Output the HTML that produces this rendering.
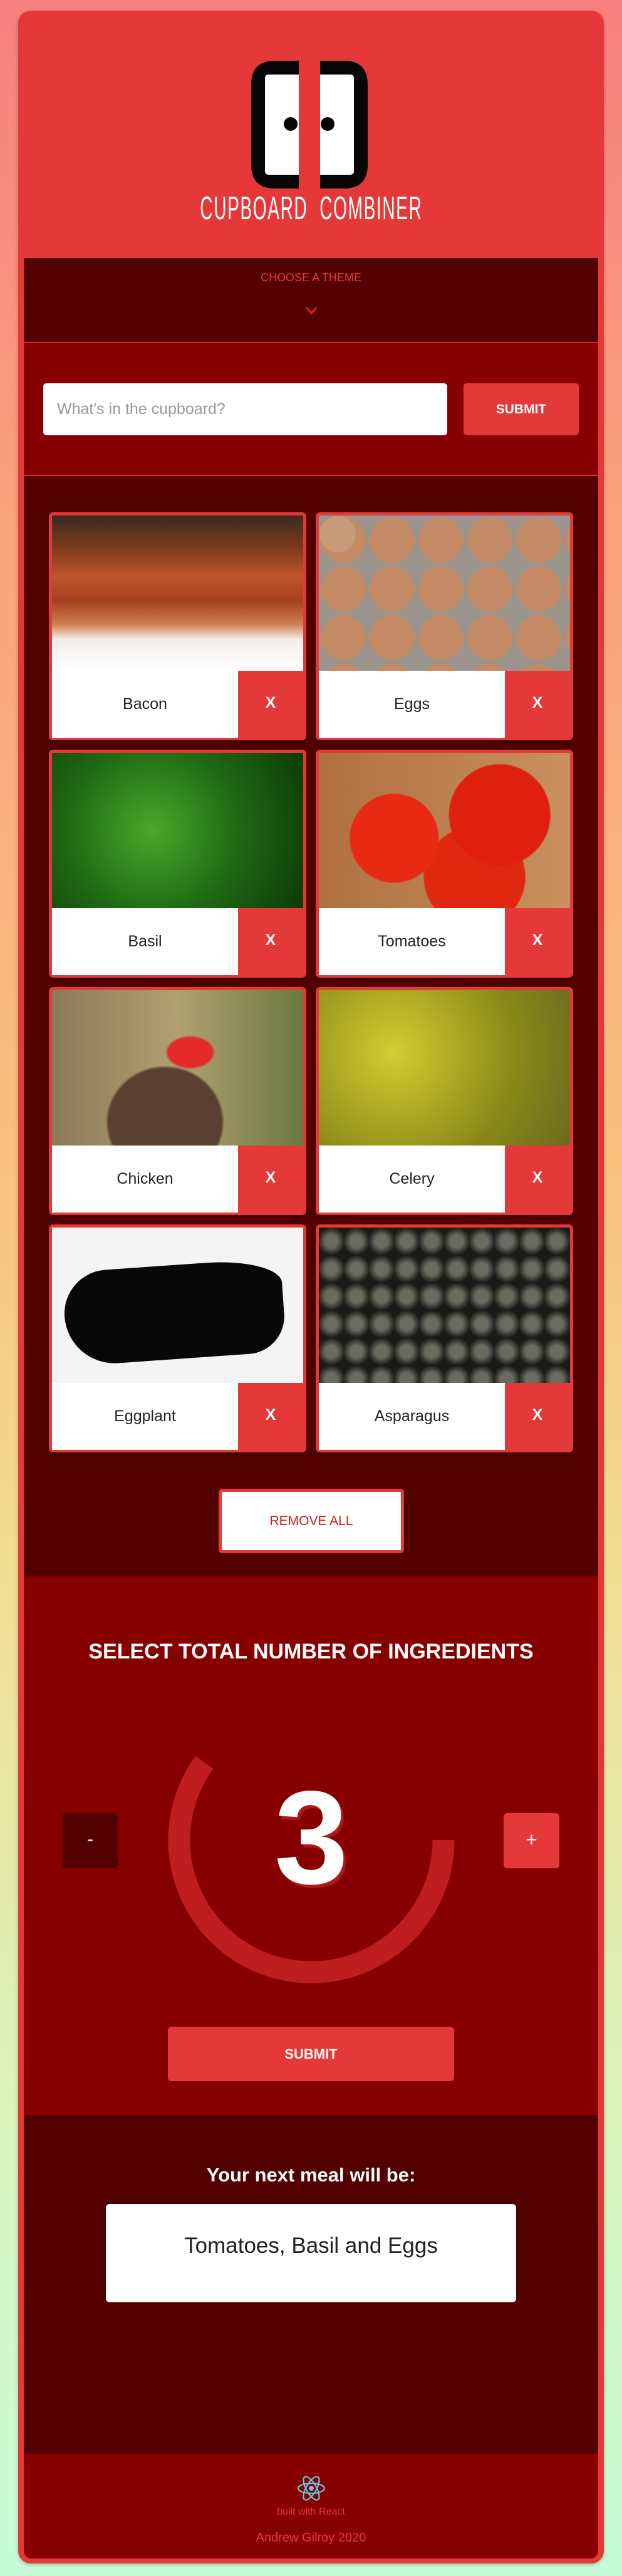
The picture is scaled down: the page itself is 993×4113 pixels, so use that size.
<!DOCTYPE html>
<html><head><meta charset="utf-8"><style>
*{margin:0;padding:0;box-sizing:border-box}
body{width:993px;height:4113px;position:relative;overflow:hidden;font-family:"Liberation Sans",sans-serif;
background:linear-gradient(180deg,#f77f7f 0%,#f9a27c 20%,#f9c07e 45%,#f2dc90 60%,#dcf2b8 80%,#c6fcd8 100%)}
.a{position:absolute}
.card{position:absolute;left:29px;top:17px;width:935px;height:4076px;background:#e53939;border-radius:20px;box-shadow:0 2px 6px rgba(0,0,0,.25)}
.ing{position:absolute;width:411px;height:364px;background:#e53939;border-radius:7px;box-shadow:0 3px 4px rgba(0,0,0,.35)}
.ing .img{position:absolute;left:5px;top:5px;width:401px;height:248px;overflow:hidden}
.ing .lab{position:absolute;left:5px;top:253px;width:297px;height:107px;background:#fff;font-size:25px;color:#222;text-align:center;line-height:107px}
.ing .x{position:absolute;left:302px;top:253px;width:104px;height:107px;color:#fff;font-weight:bold;font-size:25px;text-align:center;line-height:103px}
</style></head><body>
<div class="card"></div>
<!-- header -->
<svg class="a" style="left:401px;top:97px" width="186" height="204" viewBox="0 0 186 204">
<path d="M76 0 H38 Q0 0 0 38 V166 Q0 204 38 204 H76 Z" fill="#060606"/>
<path d="M110 0 H148 Q186 0 186 38 V166 Q186 204 148 204 H110 Z" fill="#060606"/>
<path d="M28 22 H76 V182 H28 Q22 182 22 176 V28 Q22 22 28 22Z" fill="#fff"/>
<path d="M110 22 H158 Q164 22 164 28 V176 Q164 182 158 182 H110Z" fill="#fff"/>
<ellipse cx="63" cy="101" rx="11" ry="11" fill="#060606"/>
<ellipse cx="122" cy="101" rx="11" ry="11" fill="#060606"/>
</svg>
<div class="a" style="left:0;top:303px;width:993px;text-align:center;white-space:nowrap"><span style="display:inline-block;color:#fff;font-size:52px;letter-spacing:3px;transform:scaleX(.54);transform-origin:center">CUPBOARD&nbsp;&nbsp;COMBINER</span></div>
<!-- theme -->
<div class="a" style="left:38px;top:412px;width:917px;height:135px;background:#520000;border-bottom:1px solid #b22"></div>
<div class="a" style="left:38px;top:433px;width:917px;text-align:center;color:#e53939;font-size:18px">CHOOSE A THEME</div>
<svg class="a" style="left:487px;top:488px" width="20" height="16"><path d="M2 3 L10 12 L18 3" stroke="#e0231e" stroke-width="3" fill="none"/></svg>
<!-- input -->
<div class="a" style="left:38px;top:548px;width:917px;height:211px;background:#870000;border-bottom:1px solid #c22"></div>
<div class="a" style="left:69px;top:612px;width:645px;height:83px;background:#fff;border-radius:5px;color:#999;font-size:25px;line-height:83px;padding-left:22px">What's in the cupboard?</div>
<div class="a" style="left:740px;top:612px;width:184px;height:83px;background:#e53939;border-radius:5px;color:#fff;font-weight:bold;font-size:21px;line-height:83px;text-align:center">SUBMIT</div>
<!-- ingredients -->
<div class="a" style="left:38px;top:760px;width:917px;height:1757px;background:#520000"></div>
<div class="ing" style="left:78px;top:818px"><div class="img" style="background:linear-gradient(180deg,#3a2a22 0%,#7a3a1c 20%,#c0542a 40%,#a4401e 55%,#d08050 70%,#f4eeea 80%,#fff 100%)"></div><div class="lab">Bacon</div><div class="x">X</div></div>
<div class="ing" style="left:504px;top:818px"><div class="img" style="background:radial-gradient(circle at 30px 30px,#c79a78 28px,transparent 30px),radial-gradient(circle,#c48a66 34px,#9a948c 38px);background-size:100% 100%,78px 78px;background-color:#a49a90"></div><div class="lab">Eggs</div><div class="x">X</div></div>
<div class="ing" style="left:78px;top:1197px"><div class="img" style="background:radial-gradient(circle at 40% 50%,#4aa82a,#1f6a14 50%,#0c3a08 100%)"></div><div class="lab">Basil</div><div class="x">X</div></div>
<div class="ing" style="left:504px;top:1197px"><div class="img" style="background:radial-gradient(circle at 30% 55%,#e82a14 70px,transparent 72px),radial-gradient(circle at 72% 40%,#e0200e 80px,transparent 82px),radial-gradient(circle at 62% 80%,#e02810 80px,transparent 82px),linear-gradient(90deg,#b07040,#c8915e)"></div><div class="lab">Tomatoes</div><div class="x">X</div></div>
<div class="ing" style="left:78px;top:1576px"><div class="img" style="background:radial-gradient(ellipse at 55% 40%,#e52a2a 35px,transparent 40px),radial-gradient(ellipse at 45% 85%,#5a4030 90px,transparent 95px),linear-gradient(90deg,#8a7a5a,#b0a070 50%,#6a7a40)"></div><div class="lab">Chicken</div><div class="x">X</div></div>
<div class="ing" style="left:504px;top:1576px"><div class="img" style="background:radial-gradient(circle at 30% 40%,#d4cc30,#8a8a18 60%,#6a6a20)"></div><div class="lab">Celery</div><div class="x">X</div></div>
<div class="ing" style="left:78px;top:1955px"><div class="img" style="background:#f4f4f4"><div class="a" style="left:20px;top:60px;width:350px;height:150px;background:#080808;border-radius:70px 120px 60px 80px/70px 40px 60px 80px;transform:rotate(-4deg)"></div></div><div class="lab">Eggplant</div><div class="x">X</div></div>
<div class="ing" style="left:504px;top:1955px"><div class="img" style="background:radial-gradient(circle,#6a6a60 10px,#1a1a18 22px);background-size:40px 44px;background-color:#222"></div><div class="lab">Asparagus</div><div class="x">X</div></div>
<div class="a" style="left:349px;top:2377px;width:296px;height:103px;background:#fff;border:5px solid #e53939;border-radius:6px;color:#d01818;font-size:21px;text-align:center;line-height:93px">REMOVE ALL</div>
<!-- count -->
<div class="a" style="left:38px;top:2517px;width:917px;height:860px;background:#870000"></div>
<div class="a" style="left:38px;top:2618px;width:917px;text-align:center;color:#fff;font-weight:bold;font-size:34px">SELECT TOTAL NUMBER OF INGREDIENTS</div>
<svg class="a" style="left:0;top:0" width="993" height="4113" pointer-events="none"><path d="M708 2938 A211 211 0 1 1 326.3 2814" stroke="#bf1e1e" stroke-width="35" fill="none"/></svg>
<div class="a" style="left:100px;top:2895px;width:88px;height:88px;background:#520000;border-radius:6px;color:#fff;font-size:30px;text-align:center;line-height:84px">-</div>
<div class="a" style="left:804px;top:2895px;width:89px;height:88px;background:#e53939;border-radius:6px;color:#fff;font-size:32px;text-align:center;line-height:84px">+</div>
<div class="a" style="left:397px;top:2828px;width:200px;text-align:center;color:#fff;font-weight:bold;font-size:212px;line-height:212px;text-shadow:4px 5px 0 #b01818">3</div>
<div class="a" style="left:268px;top:3236px;width:457px;height:87px;background:#e53939;border-radius:6px;color:#fff;font-weight:bold;font-size:22px;text-align:center;line-height:87px">SUBMIT</div>
<!-- result -->
<div class="a" style="left:38px;top:3377px;width:917px;height:541px;background:#520000"></div>
<div class="a" style="left:38px;top:3455px;width:917px;text-align:center;color:#fff;font-weight:bold;font-size:31px">Your next meal will be:</div>
<div class="a" style="left:169px;top:3519px;width:655px;height:157px;background:#fff;border-radius:6px;color:#222;font-size:35px;text-align:center;padding-top:47px">Tomatoes, Basil and Eggs</div>
<!-- footer -->
<div class="a" style="left:38px;top:3918px;width:917px;height:167px;background:#870000;border-radius:0 0 12px 12px"></div>
<svg class="a" style="left:474px;top:3950px" width="46" height="46" viewBox="-23 -23 46 46"><g fill="none" stroke="#61c8e0" stroke-width="2.2"><ellipse rx="21" ry="8"/><ellipse rx="21" ry="8" transform="rotate(60)"/><ellipse rx="21" ry="8" transform="rotate(120)"/></g><circle r="4" fill="#61c8e0"/></svg>
<div class="a" style="left:38px;top:4002px;width:917px;text-align:center;color:#e53939;font-size:16px">built with React</div>
<div class="a" style="left:38px;top:4041px;width:917px;text-align:center;color:#e53939;font-size:20px">Andrew Gilroy 2020</div>
</body></html>
